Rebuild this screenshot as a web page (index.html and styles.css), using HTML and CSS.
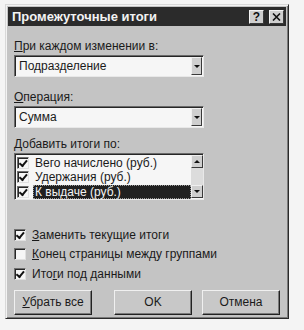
FILE: index.html
```html
<!DOCTYPE html>
<html lang="ru">
  <head>
    <meta charset="UTF-8" />
    <title>Промежуточные итоги</title>
    <link rel="stylesheet" href="styles.css">
  </head>
  <body>
    <div class="dialog">
      <div class="titlebar">
        <span class="title">Промежуточные итоги</span>
        <div class="tbuttons">
          <span class="tbtn">?</span>
          <span class="tbtn">
            <svg width="9" height="8" viewBox="0 0 9 8"><path d="M1 0.5 L8 7.5 M8 0.5 L1 7.5" stroke="#111" stroke-width="1.6"/></svg>
          </span>
        </div>
      </div>
      <div class="content">
        <p class="label first"><u>П</u>ри каждом изменении в:</p>
        <div class="combo">
          <span class="value">Подразделение</span>
          <span class="drop"><i class="arrow down"></i></span>
        </div>
        <p class="label"><u>О</u>перация:</p>
        <div class="combo">
          <span class="value">Сумма</span>
          <span class="drop"><i class="arrow down"></i></span>
        </div>
        <p class="label list-label"><u>Д</u>обавить итоги по:</p>
        <div class="listbox">
          <div class="items">
            <div class="item"><span class="check on"></span><span class="text">Вего начислено (руб.)</span></div>
            <div class="item"><span class="check on"></span><span class="text">Удержания (руб.)</span></div>
            <div class="item"><span class="check on"></span><span class="text selected">К выдаче (руб.)</span></div>
          </div>
          <div class="scrollbar">
            <span class="sbtn"><i class="arrow up"></i></span>
            <span class="track"></span>
            <span class="sbtn"><i class="arrow down"></i></span>
          </div>
        </div>
        <div class="options">
          <div class="option"><span class="check on"></span><span><u>З</u>аменить текущие итоги</span></div>
          <div class="option"><span class="check"></span><span><u>К</u>онец страницы между группами</span></div>
          <div class="option"><span class="check on"></span><span>Ито<u>г</u>и под данными</span></div>
        </div>
        <div class="buttons">
          <button class="btn"><u>У</u>брать все</button>
          <button class="btn ok">OK</button>
          <button class="btn">Отмена</button>
        </div>
      </div>
    </div>
  </body>
</html>
```
FILE: styles.css
```css
* {
  padding: 0;
  margin: 0;
  border: 0;
  box-sizing: border-box;
}
html,
body {
  width: 100%;
  height: 100%;
  background-color: #f4f4f4;
  font-family: "Liberation Sans", Arial, sans-serif;
  font-size: 12px;
  line-height: 14px;
  color: #1a1a1a;
}
button {
  font-family: inherit;
}
u {
  text-decoration: underline;
  text-underline-offset: 1px;
}
/* -------------- */
.dialog {
  margin: 4px 0 0 5px;
  width: 284px;
  height: 315px;
  background-color: #c4c4c4;
  border: 1px solid #2a2a2a;
  border-top-color: #d8d8d8;
  border-left-color: #d8d8d8;
  box-shadow: inset 1px 1px 0 #f2f2f2, inset -1px -1px 0 #7a7a7a;
  padding: 2px;
  display: flex;
  flex-direction: column;
}
.titlebar {
  height: 19px;
  background-color: #2b2b2b;
  display: flex;
  align-items: center;
  justify-content: space-between;
  padding: 0 2px 0 4px;
}
.title {
  color: #f2f2f2;
  font-weight: bold;
  font-size: 13px;
}
.tbuttons {
  display: flex;
  gap: 5px;
}
.tbtn {
  width: 15px;
  height: 14px;
  background-color: #cfcfcf;
  border: 1px solid #3a3a3a;
  border-top-color: #f4f4f4;
  border-left-color: #f4f4f4;
  display: flex;
  align-items: center;
  justify-content: center;
  font-weight: bold;
  font-size: 12px;
  color: #111;
}
.content {
  padding: 0 0 0 6px;
  display: flex;
  flex-direction: column;
}
.label {
  margin-top: 13px;
  height: 14px;
}
.combo,
.listbox {
  margin-top: 2px;
  width: 190px;
  background-color: #f6f6f6;
  border: 1px solid #6a6a6a;
  border-right-color: #e8e8e8;
  border-bottom-color: #e8e8e8;
  box-shadow: inset 1px 1px 0 #262626;
  display: flex;
}
.combo {
  height: 22px;
  align-items: center;
  justify-content: space-between;
  padding: 1px 1px 1px 4px;
}
.drop,
.sbtn {
  width: 11px;
  height: 18px;
  background-color: #cfcfcf;
  border: 1px solid #3a3a3a;
  border-top-color: #f0f0f0;
  border-left-color: #f0f0f0;
  display: flex;
  align-items: center;
  justify-content: center;
}
.arrow {
  width: 0;
  height: 0;
  border-left: 3px solid transparent;
  border-right: 3px solid transparent;
}
.arrow.down {
  border-top: 3px solid #111;
}
.arrow.up {
  border-bottom: 3px solid #111;
}
.list-label {
  margin-top: 9px;
}
.listbox {
  height: 47px;
  padding: 1px 0 0 1px;
}
.items {
  flex: 1;
  display: flex;
  flex-direction: column;
  padding: 1px 0 0 1px;
}
.item {
  height: 15px;
  display: flex;
  align-items: center;
  gap: 4px;
}
.item .text {
  padding: 0 2px;
  line-height: 14px;
}
.item .selected {
  flex: 1;
  background-color: #202020;
  color: #f4f4f4;
  outline: 1px dotted #9a9a9a;
  outline-offset: -1px;
}
.scrollbar {
  width: 12px;
  display: flex;
  flex-direction: column;
  padding-bottom: 1px;
}
.sbtn {
  width: 12px;
  height: 13px;
}
.track {
  flex: 1;
  background-color: #dcdcdc;
}
.check {
  width: 12px;
  height: 12px;
  flex-shrink: 0;
  background-color: #f6f6f6;
  border: 1px solid #707070;
  border-right-color: #e0e0e0;
  border-bottom-color: #e0e0e0;
  box-shadow: inset 1px 1px 0 #262626;
  position: relative;
}
.check.on::after {
  content: "";
  position: absolute;
  left: 2px;
  top: 1px;
  width: 3px;
  height: 6px;
  border-right: 2px solid #111;
  border-bottom: 2px solid #111;
  transform: rotate(40deg);
  transform-origin: 70% 60%;
}
.options {
  margin-top: 25px;
  display: flex;
  flex-direction: column;
}
.option {
  height: 19.5px;
  display: flex;
  align-items: center;
  gap: 6px;
}
.buttons {
  margin-top: 6px;
  display: flex;
  gap: 10px;
}
.btn {
  height: 25px;
  width: 78px;
  background-color: #c8c8c8;
  color: #1a1a1a;
  font-size: 12px;
  border: 1px solid #222;
  border-top-color: #f0f0f0;
  border-left-color: #f0f0f0;
  box-shadow: inset -1px -1px 0 #7a7a7a;
}
.btn.ok {
  margin-left: 12px;
}
```
